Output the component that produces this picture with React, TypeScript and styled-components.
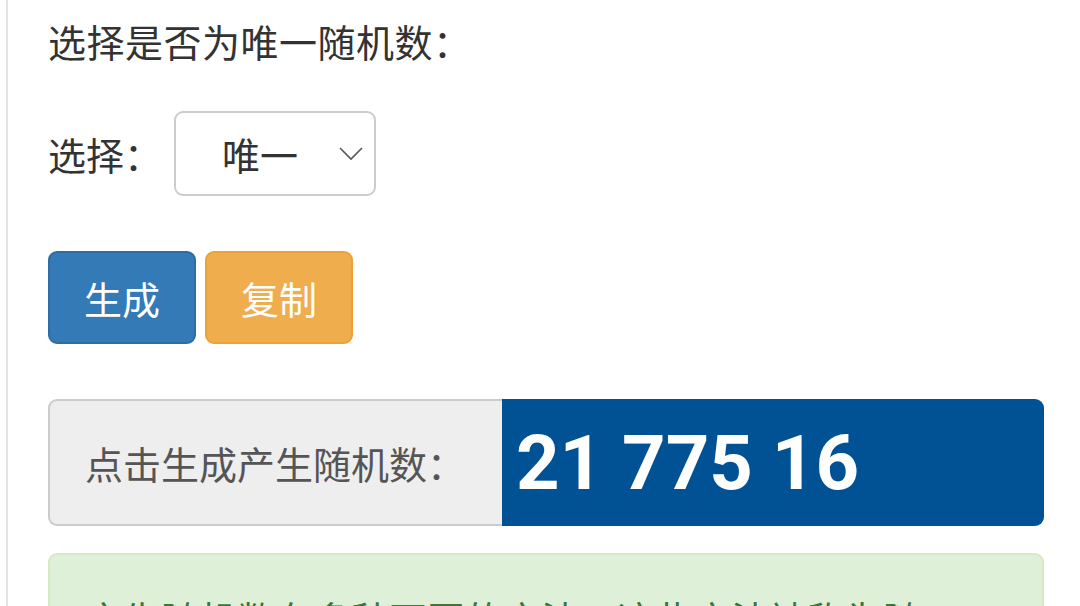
import styled, { createGlobalStyle } from "styled-components";

const GlobalStyle = createGlobalStyle`
  html, body {
    margin: 0;
    padding: 0;
    background: #fff;
    overflow: hidden;
  }
  body {
    font-family: "Noto Sans CJK SC", "Noto Sans", sans-serif;
    color: #333;
  }
`;

const Page = styled.div`
  height: 606px;
  overflow: hidden;
  margin-left: 6px;
  border-left: 2px solid #e3e3e3;
  padding: 16px 36px 0 40px;
  box-sizing: border-box;
`;

const Heading = styled.div`
  font-size: 38px;
  line-height: 50px;
  letter-spacing: 0.5px;
  color: #333;
`;

const SelectRow = styled.div`
  display: flex;
  align-items: center;
  gap: 12px;
  margin-top: 45px;
`;

const Label = styled.span`
  font-size: 38px;
  line-height: 50px;
  color: #333;
`;

const SelectBox = styled.div`
  width: 202px;
  height: 85px;
  box-sizing: border-box;
  border: 2px solid #ccc;
  border-radius: 9px;
  display: flex;
  align-items: center;
  justify-content: space-between;
  padding: 0 11px 0 46px;
  font-size: 38px;
  color: #333;
`;

const ButtonRow = styled.div`
  display: flex;
  gap: 9px;
  margin-top: 55px;
`;

const Button = styled.button<{ $tone: "primary" | "warning" }>`
  width: 148px;
  height: 93px;
  border-radius: 9px;
  font-family: "Noto Sans CJK SC", sans-serif;
  font-size: 38px;
  color: #fff;
  cursor: pointer;
  background: ${(p) => (p.$tone === "primary" ? "#337ab7" : "#f0ad4e")};
  border: 2px solid ${(p) => (p.$tone === "primary" ? "#2e6da4" : "#eea236")};
`;

const InputGroup = styled.div`
  display: flex;
  height: 127px;
  margin-top: 55px;
`;

const Addon = styled.div`
  width: 454px;
  box-sizing: border-box;
  background: #eee;
  border: 2px solid #ccc;
  border-right: none;
  border-radius: 9px 0 0 9px;
  display: flex;
  align-items: center;
  padding-left: 35px;
  font-size: 38px;
  color: #555;
`;

const Result = styled.div`
  flex: 1;
  background: #015294;
  border-radius: 0 9px 9px 0;
  display: flex;
  align-items: center;
  padding-left: 14px;
  font-family: Roboto, "Liberation Sans", sans-serif;
  font-weight: 700;
  font-size: 76px;
  color: #fff;
`;

const Alert = styled.div`
  margin-top: 27px;
  height: 120px;
  background: #dff0d8;
  border: 2px solid #d6e9c6;
  border-radius: 9px;
  box-sizing: border-box;
  padding: 36px 105px 0 35px;
  font-size: 38px;
  line-height: 54px;
  color: #3c763d;
  overflow: hidden;
`;

export default function App() {
  return (
    <>
      <GlobalStyle />
      <Page>
        <Heading>选择是否为唯一随机数：</Heading>
        <SelectRow>
          <Label>选择：</Label>
          <SelectBox>
            <span>唯一</span>
            <svg width="24" height="14" viewBox="0 0 24 14">
              <polyline points="1,1 12,12 23,1" fill="none" stroke="#555" strokeWidth="1.6" />
            </svg>
          </SelectBox>
        </SelectRow>
        <ButtonRow>
          <Button $tone="primary">生成</Button>
          <Button $tone="warning">复制</Button>
        </ButtonRow>
        <InputGroup>
          <Addon>点击生成产生随机数：</Addon>
          <Result>21 775 16</Result>
        </InputGroup>
        <Alert>产生随机数有多种不同的方法。这些方法被称为随机数生成器。</Alert>
      </Page>
    </>
  );
}
